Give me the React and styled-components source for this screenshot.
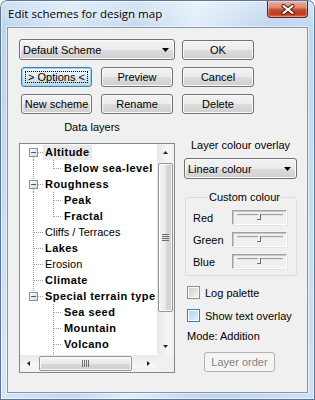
import React from 'react';
import styled, { createGlobalStyle, css } from 'styled-components';

const Global = createGlobalStyle`
  html, body { margin: 0; padding: 0; background: #ffffff; }
  body { width: 315px; height: 400px; overflow: hidden; }
  * { box-sizing: border-box; }
`;

const UI_FONT = `"Liberation Sans", Arial, sans-serif`;

const Window = styled.div`
  width: 315px;
  height: 400px;
  display: flex;
  flex-direction: column;
  padding: 0 7px 7px 7px;
  border-radius: 7px 7px 0 0;
  background:
    linear-gradient(to bottom, rgba(255,255,255,0.35), rgba(255,255,255,0) 30px),
    linear-gradient(100deg, #b9d2ec 0%, #d6e6f6 18%, #c2d8ef 36%, #e1edf9 52%, #bcd4ed 72%, #cfe1f4 100%);
  box-shadow: inset 0 0 0 1px #5b7698, inset 0 0 0 2px rgba(255,255,255,0.55);
`;

const TitleBar = styled.div`
  height: 27px;
  display: flex;
  align-items: flex-start;
`;

const TitleText = styled.div`
  padding: 6px 0 0 1px;
  font-family: "Open Sans", "Noto Sans", sans-serif;
  font-size: 11.5px;
  line-height: 15px;
  color: #000;
  text-shadow: 0 0 6px rgba(255,255,255,0.95), 0 0 10px rgba(255,255,255,0.8);
`;

const CloseButton = styled.div`
  margin-left: auto;
  margin-top: 1px;
  width: 41px;
  height: 17px;
  border: 1px solid #5e2216;
  border-top: none;
  border-radius: 0 0 4px 4px;
  background: linear-gradient(to bottom, #eab2a4 0%, #dd8a76 40%, #c84a2e 55%, #c13a1f 80%, #d9664b 100%);
  box-shadow: inset 0 0 0 1px rgba(255,255,255,0.35);
  display: flex;
  align-items: center;
  justify-content: center;
`;

const Client = styled.div`
  flex: 1;
  background: #f0f0f0;
  border: 1px solid #8497ae;
  box-shadow: 0 0 0 1px rgba(255,255,255,0.5);
  padding: 12px 0 0 11px;
  font-family: ${UI_FONT};
  font-size: 11px;
  color: #000;
`;

const TopGrid = styled.div`
  display: grid;
  grid-template-columns: 82px 81px 72px;
  grid-auto-rows: 20px;
  row-gap: 7px;
`;

const buttonBase = css`
  height: 20px;
  border: 1px solid #707070;
  border-radius: 3px;
  background: linear-gradient(to bottom, #f3f3f3 0%, #ebebeb 50%, #dddddd 50%, #cfcfcf 100%);
  box-shadow: inset 0 0 0 1px #fbfbfb;
  font-family: ${UI_FONT};
  font-size: 11px;
  color: #000;
  display: flex;
  align-items: center;
  justify-content: center;
  padding: 0;
`;

const Button = styled.div`
  ${buttonBase};
  width: ${p => p.$w || 72}px;
  margin-left: ${p => p.$ml || 0}px;
  margin-top: ${p => p.$mt || 0}px;
  ${p => p.$focused && css`
    border-color: #3c7fb1;
    background: linear-gradient(to bottom, #f1f6f9 0%, #e6eef3 50%, #d8e3ea 50%, #cbd9e2 100%);
    box-shadow: inset 0 0 0 1px #9ad7f7;
  `}
  ${p => p.$disabled && css`
    border-color: #adb2b5;
    background: #f4f4f4;
    box-shadow: none;
    color: #838383;
  `}
`;

const FocusRect = styled.span`
  display: flex;
  align-items: center;
  justify-content: center;
  width: calc(100% - 6px);
  height: calc(100% - 6px);
  border: 1px dotted #000;
`;

const Combo = styled.div`
  ${buttonBase};
  height: 21px;
  width: ${p => p.$w}px;
  margin-top: ${p => p.$mt || 0}px;
  margin-left: ${p => p.$ml || 0}px;
  grid-column: ${p => p.$span ? '1 / span 2' : 'auto'};
  align-self: start;
  justify-content: space-between;
  padding: 0 5px 0 3px;
`;

const Arrow = ({ dir = 'down', w = 7, h = 4, color = '#000' }) => {
  const pts = {
    down: `0,0 ${w},0 ${w / 2},${h}`,
    up: `0,${h} ${w},${h} ${w / 2},0`,
    left: `${h},0 ${h},${w} 0,${w / 2}`,
    right: `0,0 0,${w} ${h},${w / 2}`,
  }[dir];
  const horiz = dir === 'left' || dir === 'right';
  return (
    <svg width={horiz ? h : w} height={horiz ? w : h} style={{ display: 'block' }}>
      <polygon points={pts} fill={color} />
    </svg>
  );
};

const Bottom = styled.div`
  display: flex;
  margin-top: 6px;
`;

const LeftCol = styled.div`
  width: 156px;
  display: flex;
  flex-direction: column;
`;

const SectionLabel = styled.div`
  height: 14px;
  line-height: 14px;
  text-align: center;
  padding-right: ${p => p.$pr || 0}px;
  margin-top: ${p => p.$mt || 0}px;
`;

const Tree = styled.div`
  margin-top: 9px;
  height: 230px;
  border: 1px solid #828790;
  background: #fff;
  display: grid;
  grid-template-columns: 1fr 17px;
  grid-template-rows: 1fr 17px;
`;

const TreeContent = styled.div`
  overflow: hidden;
  display: flex;
  flex-direction: column;
`;

const TreeRow = styled.div`
  height: 16px;
  flex: none;
  display: flex;
  align-items: center;
  white-space: nowrap;
`;

const TreeLabel = styled.span`
  height: 15px;
  line-height: 15px;
  padding: 0 2px;
  font-weight: ${p => p.$bold ? 700 : 400};
  letter-spacing: ${p => p.$bold ? '0.45px' : '0'};
  background: ${p => p.$selected ? '#e9e9e9' : 'transparent'};
`;

const VScroll = styled.div`
  display: flex;
  flex-direction: column;
  background: linear-gradient(to right, #e8e8e8, #f6f6f6 60%, #f1f1f1);
`;

const HScroll = styled.div`
  display: flex;
  background: linear-gradient(to bottom, #e8e8e8, #f6f6f6 60%, #f1f1f1);
`;

const Corner = styled.div`
  background: #f0f0f0;
`;

const ScrollBtn = styled.div`
  width: 17px;
  height: 17px;
  flex: none;
  display: flex;
  align-items: center;
  justify-content: center;
`;

const ScrollTrack = styled.div`
  flex: 1;
  display: flex;
  flex-direction: ${p => p.$vertical ? 'column' : 'row'};
`;

const Thumb = styled.div`
  flex: none;
  border: 1px solid #959595;
  border-radius: 2px;
  display: flex;
  align-items: center;
  justify-content: center;
  ${p => p.$vertical ? css`
    margin: 2px 1px 0 1px;
    background: linear-gradient(to right, #f4f4f4, #e9e9e9 50%, #d9d9d9 51%, #cfcfcf);
  ` : css`
    margin: 1px 0 1px 2px;
    background: linear-gradient(to bottom, #f4f4f4, #e9e9e9 50%, #d9d9d9 51%, #cfcfcf);
  `}
  box-shadow: inset 0 0 0 1px rgba(255,255,255,0.8);
`;

const RightCol = styled.div`
  width: 113px;
  margin-left: 9px;
  display: flex;
  flex-direction: column;
`;

const Group = styled.fieldset`
  margin: 11px 0 0 1px;
  width: 112px;
  border: 1px solid #d5dfe5;
  border-radius: 3px;
  padding: 0 0 6px 7px;
  display: flex;
  flex-direction: column;
`;

const Legend = styled.legend`
  margin: 0 auto;
  padding: 0 1px;
  line-height: 14px;
  font-size: 11px;
`;

const SliderRow = styled.div`
  height: 15px;
  margin-top: ${p => p.$mt}px;
  display: flex;
  align-items: center;
`;

const SliderName = styled.span`
  width: 39px;
`;

const SliderBox = styled.div`
  width: 55px;
  height: 15px;
  border-top: 1px solid #a0a0a0;
  border-left: 1px solid #a0a0a0;
  border-right: 1px solid #ffffff;
  border-bottom: 1px solid #ffffff;
  box-shadow: inset 1px 1px 0 #c8c8c8, 1px 1px 0 #e3e3e3;
`;

const CheckRow = styled.div`
  height: 13px;
  margin-top: ${p => p.$mt}px;
  margin-left: 3px;
  display: flex;
  align-items: center;
  gap: 5px;
`;

const CheckBox = styled.span`
  width: 13px;
  height: 13px;
  flex: none;
  border: 1px solid ${p => p.$hover ? '#3c7fb1' : '#8e8f8f'};
  box-shadow: inset 0 0 0 1px #fff;
  background: ${p => p.$hover
    ? 'linear-gradient(135deg, #a9d5f3, #e2f3fd)'
    : 'linear-gradient(135deg, #cbcbcb, #f6f6f6)'};
  background-clip: content-box;
  padding: 1px;
`;

const PlainText = styled.div`
  height: 14px;
  line-height: 14px;
  margin-top: ${p => p.$mt}px;
  margin-left: 3px;
`;

const treeItems = [
  { label: 'Altitude', level: 0, bold: true, box: true, first: true, selected: true },
  { label: 'Below sea-level', level: 1, bold: true, lastChild: true, rootCont: true },
  { label: 'Roughness', level: 0, bold: true, box: true },
  { label: 'Peak', level: 1, bold: true, rootCont: true },
  { label: 'Fractal', level: 1, bold: true, lastChild: true, rootCont: true },
  { label: 'Cliffs / Terraces', level: 0 },
  { label: 'Lakes', level: 0, bold: true },
  { label: 'Erosion', level: 0 },
  { label: 'Climate', level: 0, bold: true },
  { label: 'Special terrain type', level: 0, bold: true, box: true, lastRoot: true },
  { label: 'Sea seed', level: 1, bold: true },
  { label: 'Mountain', level: 1, bold: true },
  { label: 'Volcano', level: 1, bold: true },
  { label: '', level: 1 },
];

const DOT = '#a0a0a0';

const VLine = ({ x, y1, y2 }) => (
  <line x1={x + 0.5} x2={x + 0.5} y1={y1} y2={y2} stroke={DOT} strokeDasharray="1 1" />
);
const HLine = ({ x1, x2, y }) => (
  <line x1={x1} x2={x2} y1={y + 0.5} y2={y + 0.5} stroke={DOT} strokeDasharray="1 1" />
);

const Gutter = ({ item, idx }) => {
  const w = item.level === 0 ? 23 : 42;
  const gid = `bx${idx}`;
  return (
    <svg width={w} height={16} style={{ display: 'block', flex: 'none' }}>
      {item.level === 0 && (
        <>
          {item.box ? (
            <>
              {!item.first && <VLine x={13} y1={0} y2={4} />}
              {!item.lastRoot && <VLine x={13} y1={13} y2={16} />}
              <HLine x1={18} x2={23} y={8} />
              <defs>
                <linearGradient id={gid} x1="0" y1="0" x2="1" y2="1">
                  <stop offset="0" stopColor="#ffffff" />
                  <stop offset="1" stopColor="#d6d6d6" />
                </linearGradient>
              </defs>
              <rect x={9.5} y={4.5} width={8} height={8} fill={`url(#${gid})`} stroke="#919191" />
              <rect x={11} y={8} width={5} height={1} fill="#2f5c98" />
            </>
          ) : (
            <>
              <VLine x={13} y1={0} y2={16} />
              <HLine x1={14} x2={23} y={8} />
            </>
          )}
        </>
      )}
      {item.level === 1 && (
        <>
          {item.rootCont && <VLine x={13} y1={0} y2={16} />}
          <VLine x={33} y1={0} y2={item.lastChild ? 9 : 16} />
          {item.label && <HLine x1={34} x2={42} y={8} />}
        </>
      )}
    </svg>
  );
};

const Grip = ({ vertical }) => (
  <svg width={vertical ? 8 : 7} height={vertical ? 7 : 8} style={{ display: 'block' }}>
    {[0, 2, 4, 6].map(i => vertical ? (
      <rect key={i} x={0} y={i} width={7} height={1} fill={i % 2 ? '#ffffff' : '#6f6f6f'} />
    ) : (
      <rect key={i} x={i} y={0} width={1} height={7} fill={i % 2 ? '#ffffff' : '#6f6f6f'} />
    ))}
  </svg>
);

const SliderTrack = () => (
  <svg width={53} height={13} style={{ display: 'block' }}>
    <rect x={4} y={3} width={46} height={1} fill="#a0a0a0" />
    <rect x={4} y={4} width={46} height={1} fill="#e6e6e6" />
    <rect x={25} y={3} width={3} height={2} fill="#f0f0f0" />
    <rect x={27} y={3} width={1} height={6} fill="#6e6e6e" />
    <rect x={24} y={8} width={4} height={1} fill="#6e6e6e" />
  </svg>
);

const CloseGlyph = () => (
  <svg width={14} height={11} style={{ display: 'block' }}>
    <path d="M2.5 2 L11.5 9 M11.5 2 L2.5 9" stroke="#3b1a14" strokeWidth="4" strokeLinecap="round" />
    <path d="M2.5 2 L11.5 9 M11.5 2 L2.5 9" stroke="#ffffff" strokeWidth="2.2" strokeLinecap="round" />
  </svg>
);

export default function App() {
  return (
    <>
      <Global />
      <Window>
        <TitleBar>
          <TitleText>Edit schemes for design map</TitleText>
          <CloseButton><CloseGlyph /></CloseButton>
        </TitleBar>
        <Client>
          <TopGrid>
            <Combo $span $w={156} $mt={-1}>
              <span>Default Scheme</span>
              <Arrow dir="down" />
            </Combo>
            <Button>OK</Button>
            <Button $ml={2} $w={71} $focused><FocusRect>&gt; Options &lt;</FocusRect></Button>
            <Button>Preview</Button>
            <Button>Cancel</Button>
            <Button $ml={2} $w={71}>New scheme</Button>
            <Button>Rename</Button>
            <Button>Delete</Button>
          </TopGrid>
          <Bottom>
            <LeftCol>
              <SectionLabel $pr={10}>Data layers</SectionLabel>
              <Tree>
                <TreeContent>
                  {treeItems.map((it, i) => (
                    <TreeRow key={i}>
                      <Gutter item={it} idx={i} />
                      {it.label && <TreeLabel $bold={it.bold} $selected={it.selected}>{it.label}</TreeLabel>}
                    </TreeRow>
                  ))}
                </TreeContent>
                <VScroll>
                  <ScrollBtn><Arrow dir="up" w={5} h={3} color="#222" /></ScrollBtn>
                  <ScrollTrack $vertical>
                    <Thumb $vertical style={{ height: 149 }}><Grip vertical /></Thumb>
                  </ScrollTrack>
                  <ScrollBtn><Arrow dir="down" w={5} h={3} color="#222" /></ScrollBtn>
                </VScroll>
                <HScroll>
                  <ScrollBtn><Arrow dir="left" w={5} h={3} color="#222" /></ScrollBtn>
                  <ScrollTrack>
                    <Thumb style={{ width: 93 }}><Grip /></Thumb>
                  </ScrollTrack>
                  <ScrollBtn><Arrow dir="right" w={5} h={3} color="#222" /></ScrollBtn>
                </HScroll>
                <Corner />
              </Tree>
            </LeftCol>
            <RightCol>
              <SectionLabel $mt={18}>Layer colour overlay</SectionLabel>
              <Combo $w={113} $mt={6}>
                <span>Linear colour</span>
                <Arrow dir="down" />
              </Combo>
              <Group>
                <Legend>Custom colour</Legend>
                <SliderRow $mt={6}><SliderName>Red</SliderName><SliderBox><SliderTrack /></SliderBox></SliderRow>
                <SliderRow $mt={7}><SliderName>Green</SliderName><SliderBox><SliderTrack /></SliderBox></SliderRow>
                <SliderRow $mt={7}><SliderName>Blue</SliderName><SliderBox><SliderTrack /></SliderBox></SliderRow>
              </Group>
              <CheckRow $mt={10}><CheckBox />Log palette</CheckRow>
              <CheckRow $mt={10}><CheckBox $hover />Show text overlay</CheckRow>
              <PlainText $mt={7}>Mode: Addition</PlainText>
              <Button $disabled $w={71} $ml={20} $mt={9}>Layer order</Button>
            </RightCol>
          </Bottom>
        </Client>
      </Window>
    </>
  );
}
